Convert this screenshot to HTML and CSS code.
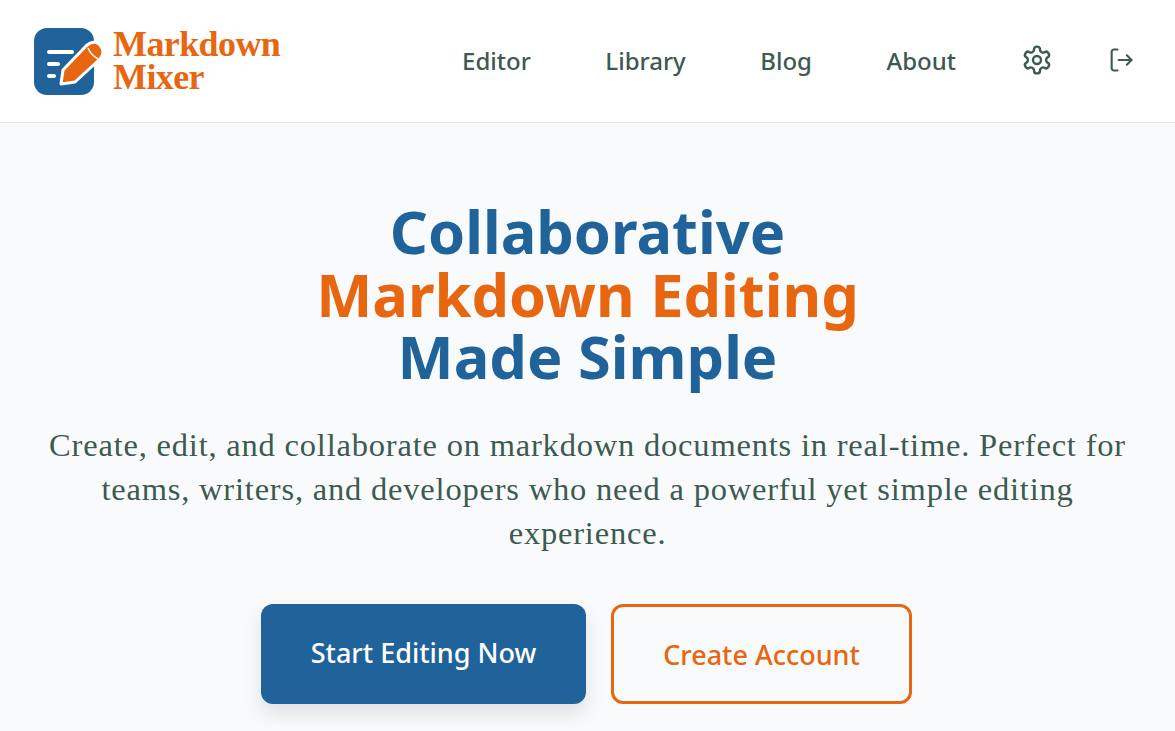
FILE: index.html
```html
<!DOCTYPE html>
<html lang="en">
<head>
    <meta charset="UTF-8">
    <meta name="viewport" content="width=device-width, initial-scale=1.0">
    <title>Markdown Mixer</title>
    <link rel="stylesheet" href="styles.css">
</head>
<body>
    <header class="site-header">
        <a class="brand" href="#">
            <svg class="brand-icon" viewBox="0 0 60 67" width="60" height="67">
                <rect width="60" height="67" rx="13" fill="#20639b"/>
                <path d="M15 24H38M15 36H24M15 48H20" stroke="#fff" stroke-width="4" stroke-linecap="round" fill="none"/>
                <path d="M27 56L29 42L52 18Q60 11 66 17Q72 24 66 31L41 54Z" fill="#e8660f" stroke="#fff" stroke-width="3" stroke-linejoin="round"/>
                <path d="M54 20Q57 27 64 31" stroke="#fff" stroke-width="1.5" fill="none"/>
            </svg>
            <span class="brand-name">Markdown<br>Mixer</span>
        </a>
        <nav class="main-nav">
            <div class="nav-links">
                <a href="#">Editor</a>
                <a href="#">Library</a>
                <a href="#">Blog</a>
                <a href="#">About</a>
            </div>
            <div class="nav-icons">
                <a class="nav-icon" href="#" aria-label="Settings">
                    <svg viewBox="0 0 24 24" width="32" height="32" fill="none" stroke="currentColor" stroke-width="1.8" stroke-linecap="round" stroke-linejoin="round">
                        <path d="M12.22 2h-.44a2 2 0 0 0-2 2v.18a2 2 0 0 1-1 1.73l-.43.25a2 2 0 0 1-2 0l-.15-.08a2 2 0 0 0-2.73.73l-.22.38a2 2 0 0 0 .73 2.73l.15.1a2 2 0 0 1 1 1.72v.51a2 2 0 0 1-1 1.74l-.15.09a2 2 0 0 0-.73 2.73l.22.38a2 2 0 0 0 2.73.73l.15-.08a2 2 0 0 1 2 0l.43.25a2 2 0 0 1 1 1.73V20a2 2 0 0 0 2 2h.44a2 2 0 0 0 2-2v-.18a2 2 0 0 1 1-1.73l.43-.25a2 2 0 0 1 2 0l.15.08a2 2 0 0 0 2.73-.73l.22-.39a2 2 0 0 0-.73-2.73l-.15-.08a2 2 0 0 1-1-1.74v-.5a2 2 0 0 1 1-1.74l.15-.09a2 2 0 0 0 .73-2.73l-.22-.38a2 2 0 0 0-2.73-.73l-.15.08a2 2 0 0 1-2 0l-.43-.25a2 2 0 0 1-1-1.73V4a2 2 0 0 0-2-2z"/>
                        <circle cx="12" cy="12" r="3"/>
                    </svg>
                </a>
                <a class="nav-icon" href="#" aria-label="Log out">
                    <svg viewBox="0 0 24 24" width="28" height="28" fill="none" stroke="currentColor" stroke-width="1.8" stroke-linecap="round" stroke-linejoin="round">
                        <path d="M9 21H6a2 2 0 0 1-2-2V5a2 2 0 0 1 2-2h3"/>
                        <path d="M17 16l4-4-4-4"/>
                        <path d="M21 12H10"/>
                    </svg>
                </a>
            </div>
        </nav>
    </header>

    <main class="hero">
        <h1>Collaborative<br><span class="accent">Markdown Editing</span><br>Made Simple</h1>
        <p class="lead">Create, edit, and collaborate on markdown documents in real-time. Perfect for teams, writers, and developers who need a powerful yet simple editing experience.</p>
        <div class="hero-actions">
            <a class="btn btn-primary" href="#">Start Editing Now</a>
            <a class="btn btn-outline" href="#">Create Account</a>
        </div>
    </main>
</body>
</html>
```

FILE: styles.css
```css
:root {
    --blue: #20639b;
    --orange: #e8660f;
    --text: #3d5a50;
    --bg: #f9fafc;
    --border: #e5e7eb;
}

* {
    box-sizing: border-box;
}

html, body {
    height: 100%;
}

body {
    margin: 0;
    background: var(--bg);
    color: var(--text);
    font-family: "Noto Sans", "Open Sans", sans-serif;
    overflow: hidden;
}

a {
    color: inherit;
    text-decoration: none;
}

.site-header {
    height: 123px;
    padding: 0 40px 0 34px;
    background: #fff;
    border-bottom: 1px solid var(--border);
    display: flex;
    justify-content: space-between;
    align-items: center;
}

.brand {
    display: flex;
    align-items: center;
    gap: 19px;
}

.brand-icon {
    overflow: visible;
}

.brand-name {
    font-family: "Liberation Serif", serif;
    font-size: 36px;
    font-weight: 700;
    line-height: 33px;
    letter-spacing: -0.6px;
    color: var(--orange);
}

.main-nav {
    display: flex;
    align-items: center;
    gap: 65px;
    margin-bottom: 2px;
    font-size: 24px;
    font-weight: 500;
}

.nav-links {
    display: flex;
    gap: 74.5px;
}

.nav-icons {
    display: flex;
    align-items: center;
    gap: 54px;
}

.nav-icon {
    display: flex;
}

.hero {
    padding: 77px 40px 0;
    text-align: center;
}

h1 {
    margin: 0;
    font-size: 59.5px;
    line-height: 62.5px;
    font-weight: 700;
    color: var(--blue);
}

.accent {
    color: var(--orange);
}

.lead {
    margin: 35.5px 0 0;
    font-family: "Liberation Serif", serif;
    font-size: 32.5px;
    letter-spacing: 0.8px;
    line-height: 44px;
}

.hero-actions {
    margin-top: 49px;
    padding-right: 2px;
    display: flex;
    justify-content: center;
    gap: 25px;
}

.btn {
    height: 100px;
    display: flex;
    align-items: center;
    justify-content: center;
    border-radius: 12px;
    font-size: 27px;
    font-weight: 500;
}

.btn-primary {
    width: 325px;
    padding-bottom: 4px;
    background: var(--blue);
    color: #fff;
    box-shadow: 0 10px 20px rgba(0, 0, 0, 0.1);
}

.btn-outline {
    width: 301px;
    border: 3px solid var(--orange);
    color: var(--orange);
}
```
